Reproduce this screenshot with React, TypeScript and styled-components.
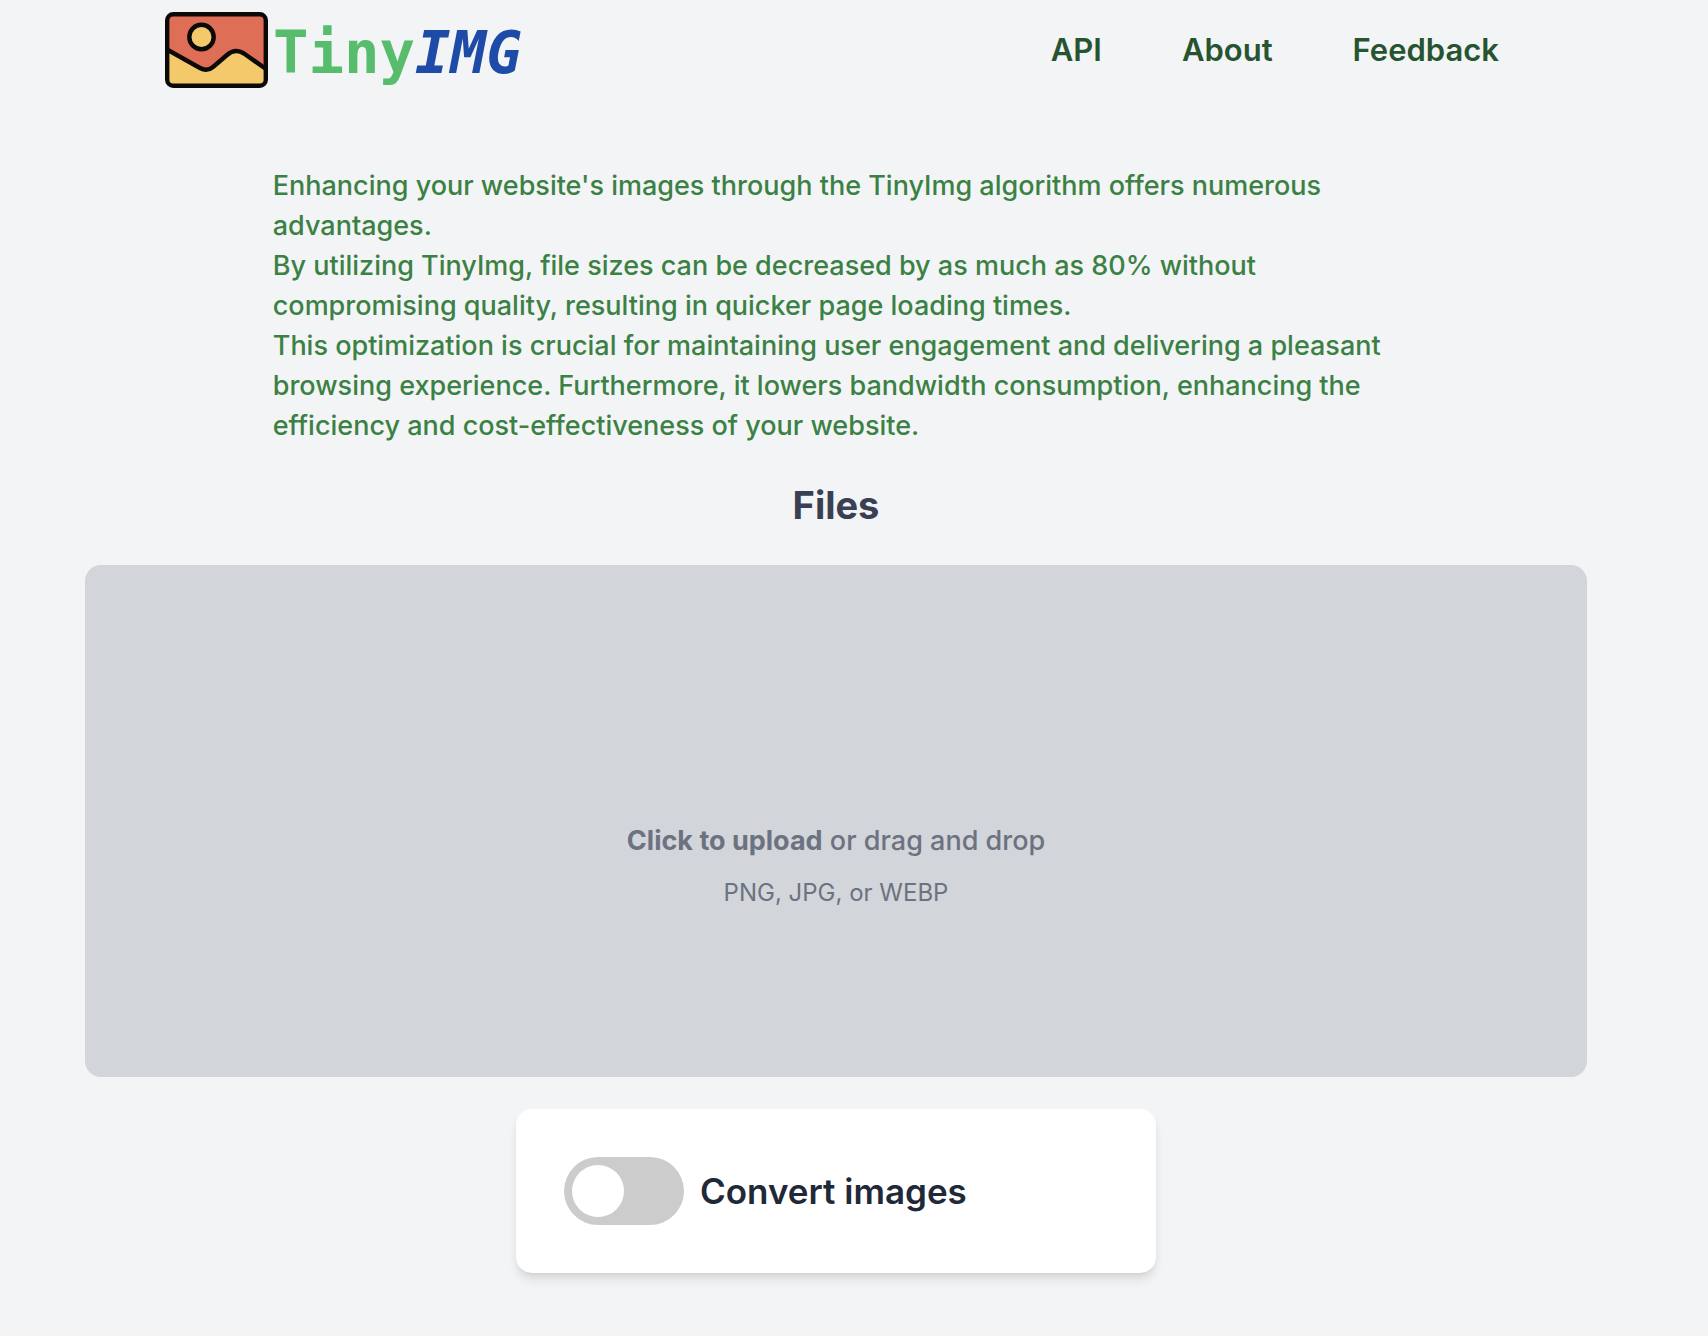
import { useState } from "react";
import styled, { createGlobalStyle } from "styled-components";

const GlobalStyle = createGlobalStyle`
  *, *::before, *::after { box-sizing: border-box; }
  body {
    margin: 0;
    background: #f3f4f6;
    font-family: Inter, "Liberation Sans", sans-serif;
    -webkit-font-smoothing: antialiased;
  }
  h1, h2, p { margin: 0; }
`;

const Page = styled.div`
  min-height: 100vh;
  padding: 0 121px 48px 85px;
`;

const Header = styled.header`
  display: flex;
  align-items: center;
  justify-content: space-between;
  height: 100px;
  padding: 0 88px 0 80px;
`;

const Logo = styled.a`
  display: flex;
  align-items: center;
  gap: 5px;
  text-decoration: none;
`;

const LogoIcon = styled.svg`
  display: block;
  width: 103px;
  height: 76px;
`;

const LogoText = styled.span`
  padding-top: 5px;
  color: #57bd6c;
  font: 700 59px/72px "DejaVu Sans Mono", monospace;
`;

const LogoAccent = styled.span`
  color: #1e4aa8;
  font-style: italic;
`;

const Nav = styled.nav`
  display: flex;
  gap: 80px;
`;

const NavLink = styled.a`
  color: #275430;
  font-size: 31px;
  font-weight: 600;
  line-height: 48px;
  text-decoration: none;
`;

const Main = styled.main`
  display: flex;
  flex-direction: column;
  align-items: center;
`;

const Intro = styled.div`
  width: 75%;
  margin-top: 66px;
  color: #3c8144;
  font-size: 27px;
  font-weight: 500;
  line-height: 40px;
`;

const Heading = styled.h2`
  margin: 35px 0 36px;
  color: #394053;
  font-size: 38px;
  font-weight: 700;
  line-height: 48px;
`;

const DropZone = styled.label`
  display: flex;
  flex-direction: column;
  align-items: center;
  justify-content: center;
  gap: 16px;
  width: 100%;
  height: 512px;
  padding-top: 88px;
  border-radius: 16px;
  background: #d2d5da;
  color: #6c7280;
  cursor: pointer;
`;

const HiddenInput = styled.input`
  position: absolute;
  width: 1px;
  height: 1px;
  opacity: 0;
`;

const UploadText = styled.span`
  font-size: 27px;
  font-weight: 500;
  line-height: 40px;
`;

const UploadHint = styled.span`
  font-size: 24px;
  line-height: 32px;
`;

const Strong = styled.strong`
  font-weight: 700;
`;

const Card = styled.section`
  width: 640px;
  max-width: 100%;
  margin-top: 32px;
  padding: 48px;
  border-radius: 16px;
  background: #fff;
  box-shadow: 0 8px 12px -2px rgba(0, 0, 0, 0.1), 0 4px 8px -4px rgba(0, 0, 0, 0.1);
`;

const SwitchLabel = styled.label`
  display: flex;
  align-items: center;
  gap: 16px;
  color: #1f2937;
  font-size: 35px;
  font-weight: 600;
  line-height: 56px;
  cursor: pointer;
`;

const Switch = styled.input`
  appearance: none;
  flex: none;
  width: 120px;
  height: 68px;
  margin: 0;
  padding: 8px;
  border-radius: 34px;
  background: #ccc;
  cursor: pointer;

  &::before {
    content: "";
    display: block;
    width: 52px;
    height: 52px;
    border-radius: 50%;
    background: #fff;
    transition: margin-left 0.3s;
  }
  &:checked { background: #2196f3; }
  &:checked::before { margin-left: 52px; }
`;

const links = ["API", "About", "Feedback"];

export default function App() {
  const [convert, setConvert] = useState(false);
  return (
    <Page>
      <GlobalStyle />
      <Header>
        <Logo href="#">
          <LogoIcon viewBox="0 0 103 76" aria-hidden="true">
            <rect x="2" y="2" width="99" height="72" rx="6" fill="#df6e57" />
            <path
              d="M2 37.5 L35 56 Q42 60 48 55 L62 43 Q70 36 79 41.5 L101 57 V68 Q101 74 95 74 H8 Q2 74 2 68 Z"
              fill="#f3c96c"
            />
            <path
              d="M2 37.5 L35 56 Q42 60 48 55 L62 43 Q70 36 79 41.5 L101 57"
              fill="none"
              stroke="#0c0a08"
              strokeWidth="4.4"
            />
            <circle cx="36.5" cy="25" r="12.2" fill="#f3c96c" stroke="#0c0a08" strokeWidth="4.4" />
            <rect x="2.2" y="2.2" width="98.6" height="71.6" rx="6" fill="none" stroke="#0c0a08" strokeWidth="4.4" />
          </LogoIcon>
          <LogoText>
            Tiny<LogoAccent>IMG</LogoAccent>
          </LogoText>
        </Logo>
        <Nav>
          {links.map((name) => (
            <NavLink key={name} href={`#${name.toLowerCase()}`}>
              {name}
            </NavLink>
          ))}
        </Nav>
      </Header>
      <Main>
        <Intro>
          <p>
            Enhancing your website's images through the TinyImg algorithm offers numerous advantages.
          </p>
          <p>
            By utilizing TinyImg, file sizes can be decreased by as much as 80% without compromising
            quality, resulting in quicker page loading times.
          </p>
          <p>
            This optimization is crucial for maintaining user engagement and delivering a pleasant
            browsing experience. Furthermore, it lowers bandwidth consumption, enhancing the
            efficiency and cost-effectiveness of your website.
          </p>
        </Intro>
        <Heading>Files</Heading>
        <DropZone>
          <HiddenInput type="file" accept=".png,.jpg,.webp" multiple />
          <UploadText>
            <Strong>Click to upload</Strong> or drag and drop
          </UploadText>
          <UploadHint>PNG, JPG, or WEBP</UploadHint>
        </DropZone>
        <Card>
          <SwitchLabel>
            <Switch
              type="checkbox"
              role="switch"
              checked={convert}
              onChange={(event) => setConvert(event.target.checked)}
            />
            Convert images
          </SwitchLabel>
        </Card>
      </Main>
    </Page>
  );
}
